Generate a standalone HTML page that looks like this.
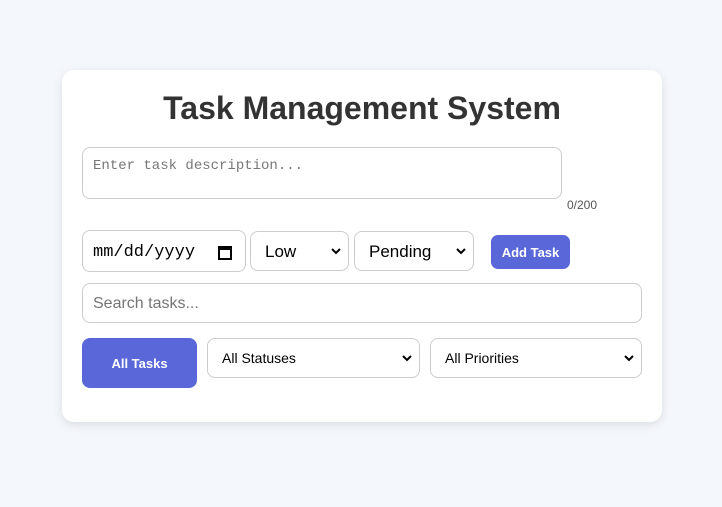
<!DOCTYPE html><html><head><style>
body{margin:0;width:722px;height:507px;background:#f4f7fb;font-family:"Liberation Sans",sans-serif;position:relative;overflow:hidden}
.card{position:absolute;left:62px;top:70px;width:600px;height:352px;background:#fff;border-radius:12px;box-shadow:0 3px 10px rgba(0,0,0,.1)}
.a{position:absolute;box-sizing:border-box;border:1px solid #ccc;border-radius:8px;background:#fff;display:flex;align-items:center;color:#000}
.btn{position:absolute;background:#5a67d8;color:#fff;font-weight:bold;font-size:13px;border-radius:7px;display:flex;align-items:center;justify-content:center}
.chev{position:absolute;right:7px;top:50%;margin-top:-4px}
h1{position:absolute;left:0;width:724px;top:90px;margin:0;text-align:center;font-size:32px;color:#333;font-weight:bold}
</style></head><body>
<div class="card"></div>
<h1>Task Management System</h1>
<div class="a" style="left:82px;top:147px;width:480px;height:52px;align-items:flex-start;padding:10px 10px;font-family:'Liberation Mono',monospace;font-size:14px;color:#777">Enter task description...</div>
<div style="position:absolute;left:567px;top:198px;font-size:12px;color:#555">0/200</div>
<div class="a" style="left:82px;top:230px;width:164px;height:42px;padding:2px 0 0 10px;font-family:'Liberation Mono',monospace;font-size:17px">mm/dd/yyyy
<svg style="position:absolute;right:13px;top:14px" width="14" height="15" viewBox="0 0 14 15"><rect x="1" y="2" width="12" height="12" fill="none" stroke="#000" stroke-width="2"/><rect x="1" y="2" width="12" height="3" fill="#000"/></svg></div>
<div class="a" style="left:250px;top:231px;width:99px;height:40px;padding:2px 0 0 14px;font-size:17px">Low<svg class="chev" width="10" height="8" viewBox="0 0 10 8"><path d="M1 2l4 4 4-4" fill="none" stroke="#000" stroke-width="2"/></svg></div>
<div class="a" style="left:354px;top:231px;width:120px;height:40px;padding:2px 0 0 14px;font-size:17px">Pending<svg class="chev" width="10" height="8" viewBox="0 0 10 8"><path d="M1 2l4 4 4-4" fill="none" stroke="#000" stroke-width="2"/></svg></div>
<div class="btn" style="left:491px;top:235px;width:79px;height:34px">Add Task</div>
<div class="a" style="left:82px;top:283px;width:560px;height:40px;padding:2px 0 0 10px;font-size:16px;color:#757575">Search tasks...</div>
<div class="btn" style="left:82px;top:338px;width:115px;height:50px;border-radius:8px">All Tasks</div>
<div class="a" style="left:207px;top:338px;width:213px;height:40px;padding-left:14px;font-size:14px">All Statuses<svg class="chev" width="10" height="8" viewBox="0 0 10 8"><path d="M1 2l4 4 4-4" fill="none" stroke="#000" stroke-width="2"/></svg></div>
<div class="a" style="left:430px;top:338px;width:212px;height:40px;padding-left:14px;font-size:14px">All Priorities<svg class="chev" width="10" height="8" viewBox="0 0 10 8"><path d="M1 2l4 4 4-4" fill="none" stroke="#000" stroke-width="2"/></svg></div>
</body></html>
